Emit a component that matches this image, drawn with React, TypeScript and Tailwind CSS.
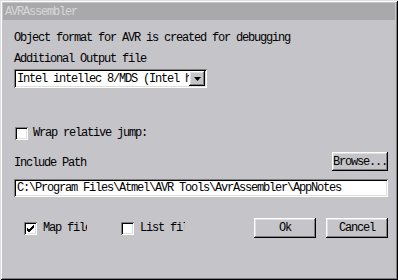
import React from "react";

const font = { fontFamily: '"Liberation Mono", "DejaVu Sans Mono", monospace' };

const raised =
  "shadow-[inset_-1px_-1px_0_#000,inset_1px_1px_0_#fff,inset_-2px_-2px_0_#808080,inset_2px_2px_0_#dfdfdf]";
const sunken =
  "shadow-[inset_1px_1px_0_#808080,inset_-1px_-1px_0_#fff,inset_2px_2px_0_#000,inset_-2px_-2px_0_#dfdfdf]";

function Check({ checked }: { checked?: boolean }) {
  return (
    <div className={`w-[13px] h-[13px] bg-white ${sunken} flex items-center justify-center shrink-0`}>
      {checked && (
        <svg width="9" height="9" viewBox="0 0 9 9">
          <path d="M1 4 L3 6 L8 1 M1 5 L3 7 L8 2 M1 6 L3 8 L8 3" stroke="#000" strokeWidth="1" fill="none" />
        </svg>
      )}
    </div>
  );
}

export default function App() {
  return (
    <div
      className="w-[398px] h-[280px] bg-[#c5c4c8] p-[3px] text-[12px] leading-[12px] tracking-[-1.2px] text-black shadow-[inset_1px_1px_0_#dfdfdf,inset_-1px_-1px_0_#000,inset_2px_2px_0_#fff,inset_-2px_-2px_0_#808080] flex flex-col"
      style={font}
    >
      <div className="h-[17px] bg-[#a9a8ab] text-[#d8d8d8] flex items-center pl-[2px]">AVRAssembler</div>
      <div className="flex flex-col pl-[11px] pr-[7px]">
        <div className="mt-[12px] h-[12px]">Object format for AVR is created for debugging</div>
        <div className="mt-[9px] h-[12px]">Additional Output file</div>
        <div className={`mt-[4px] w-[193px] h-[19px] bg-white ${sunken} flex items-center p-[2px]`}>
          <div className="flex-1 overflow-hidden whitespace-nowrap pl-[1px] pt-[1px]">Intel intellec 8/MDS (Intel hex)</div>
          <div className={`w-[16px] h-[15px] bg-[#c5c4c8] ${raised} flex items-center justify-center`}>
            <svg width="7" height="4" viewBox="0 0 7 4">
              <path d="M0 0 H7 L3.5 4 Z" fill="#000" />
            </svg>
          </div>
        </div>
        <div className="mt-[39px] flex items-center gap-[5px] pl-[1px] h-[12px]">
          <Check />
          <span>Wrap relative jump:</span>
        </div>
        <div className="mt-[13px] flex items-center justify-between h-[19px]">
          <span className="mt-[2px]">Include Path</span>
          <div className={`w-[56px] h-[19px] ${raised} flex items-center justify-center`}>Browse...</div>
        </div>
        <div className={`mt-[8px] h-[18px] bg-white ${sunken} flex items-center pl-[3px] overflow-hidden whitespace-nowrap`}>
          C:\Program Files\Atmel\AVR Tools\AvrAssembler\AppNotes
        </div>
        <div className="mt-[21px] flex items-center h-[20px]">
          <div className="ml-[10px] flex items-center gap-[6px]">
            <Check checked />
            <span className="w-[44px] overflow-hidden whitespace-nowrap">Map file</span>
          </div>
          <div className="ml-[34px] flex items-center gap-[6px]">
            <Check />
            <span className="w-[45px] overflow-hidden whitespace-nowrap">List file</span>
          </div>
          <div className={`ml-auto w-[62px] h-[20px] ${raised} flex items-center justify-center`}>Ok</div>
          <div className={`ml-[10px] w-[62px] h-[20px] ${raised} flex items-center justify-center`}>Cancel</div>
        </div>
      </div>
    </div>
  );
}
